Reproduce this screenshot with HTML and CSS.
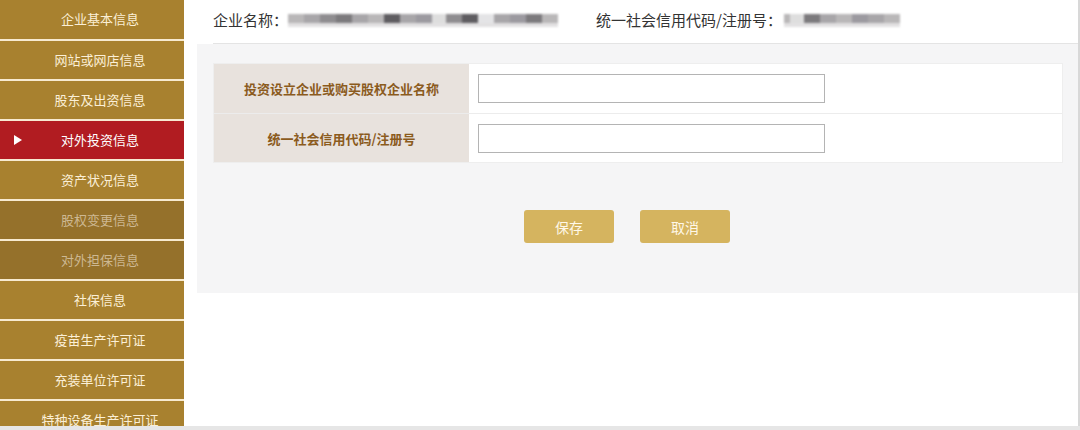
FILE: index.html
```html
<!DOCTYPE html>
<html lang="zh-CN">
<head>
<meta charset="utf-8">
<link rel="stylesheet" href="styles.css">
</head>
<body>
<div class="page">
  <nav class="sidebar">
    <div class="nav-item">企业基本信息</div>
    <div class="nav-item">网站或网店信息</div>
    <div class="nav-item">股东及出资信息</div>
    <div class="nav-item active"><span class="arrow"></span>对外投资信息</div>
    <div class="nav-item">资产状况信息</div>
    <div class="nav-item disabled">股权变更信息</div>
    <div class="nav-item disabled">对外担保信息</div>
    <div class="nav-item">社保信息</div>
    <div class="nav-item">疫苗生产许可证</div>
    <div class="nav-item">充装单位许可证</div>
    <div class="nav-item">特种设备生产许可证</div>
  </nav>
  <main class="main">
    <div class="header">
      <div class="field name-field">
        <span class="field-label">企业名称：</span>
        <span class="blur blur-name"><i class="b1"></i><i class="b3"></i><i class="b2"></i><i class="b4"></i><i class="b3"></i><i class="b1"></i><i class="b6"></i><i class="b3"></i><i class="b5"></i><i class="gap"></i><i class="b2"></i><i class="b6"></i><i class="gap2"></i><i class="b3"></i><i class="b5"></i><i class="b4"></i><i class="b1"></i></span>
      </div>
      <div class="field code-field">
        <span class="field-label">统一社会信用代码/注册号：</span>
        <span class="blur blur-code"><i class="b1 narrow"></i><i class="gap"></i><i class="b4"></i><i class="b3"></i><i class="b1"></i><i class="b5"></i><i class="b3"></i><i class="b1"></i></span>
      </div>
    </div>
    <div class="panel">
      <div class="form-table">
        <div class="row">
          <div class="label">投资设立企业或购买股权企业名称</div>
          <div class="value"><input class="text-input" type="text"></div>
        </div>
        <div class="row">
          <div class="label">统一社会信用代码/注册号</div>
          <div class="value"><input class="text-input" type="text"></div>
        </div>
      </div>
      <div class="actions">
        <button class="btn">保存</button>
        <button class="btn">取消</button>
      </div>
    </div>
  </main>
  <div class="scrollbar"></div>
</div>
<div class="bottom-strip"></div>
</body>
</html>
```

FILE: styles.css
```css
* { box-sizing: border-box; }
html, body {
  margin: 0;
  padding: 0;
  background: #ffffff;
  font-family: "Noto Sans CJK SC", "Noto Sans", sans-serif;
}
.page {
  display: flex;
  height: 426px;
  overflow: hidden;
}
.sidebar {
  width: 184px;
  flex: none;
  display: flex;
  flex-direction: column;
  gap: 2px;
  background: #f7ead0;
  height: 426px;
  overflow: hidden;
}
.nav-item {
  flex: none;
  height: 38px;
  line-height: 38px;
  background: #a8812f;
  color: #fbefd6;
  font-size: 13px;
  text-align: center;
  padding-left: 16px;
  position: relative;
  white-space: nowrap;
}
.nav-item:first-child { height: 39px; }
.nav-item.disabled {
  background: #95712b;
  color: #cdb892;
}
.nav-item.active {
  background: #b11c21;
  color: #ffffff;
}
.arrow {
  position: absolute;
  left: 14px;
  top: 14px;
  width: 0;
  height: 0;
  border-top: 5px solid transparent;
  border-bottom: 5px solid transparent;
  border-left: 8px solid #ffffff;
}
.main {
  flex: 1;
  margin-left: 13px;
  display: flex;
  flex-direction: column;
}
.header {
  height: 44px;
  margin-left: 16px;
  border-bottom: 1px solid #e4e4e4;
  display: flex;
  align-items: center;
  font-size: 15px;
  color: #333333;
  padding-bottom: 4px;
}
.field {
  display: flex;
  align-items: center;
}
.name-field { width: 383px; }
.blur {
  display: flex;
  align-items: flex-start;
  height: 14px;
  filter: blur(0.9px);
  position: relative;
  top: 1px;
}
.blur-name { margin-left: 0; }
.blur-code { margin-left: 2px; }
.blur i {
  display: block;
  height: 9px;
  width: 16px;
  box-shadow: 0 4px 0 #e2e1e2;
}
.blur .narrow { width: 6px; }
.blur .b1 { background: #b9b7b8; }
.blur .b2 { background: #8f8d90; }
.blur .b3 { background: #a8a6a9; }
.blur .b4 { background: #7c7a7d; }
.blur .b5 { background: #9c9aa0; }
.blur .b6 { background: #5f5d61; }
.blur .gap { background: #dedede; width: 14px; }
.blur .gap2 { background: #e4e4e6; width: 16px; }
.panel {
  background: #f5f5f6;
  height: 249px;
  padding: 19px 15px 0 16px;
}
.form-table {
  background: #ffffff;
  border: 1px solid #eeeeee;
}
.row {
  display: flex;
  height: 49px;
}
.row + .row {
  border-top: 1px solid #ececec;
}
.label {
  width: 255px;
  flex: none;
  background: #e8e2dd;
  color: #8b5b1d;
  font-size: 13px;
  font-weight: bold;
  display: flex;
  align-items: center;
  justify-content: center;
}
.value {
  flex: 1;
  display: flex;
  align-items: center;
  padding-left: 9px;
}
.text-input {
  width: 347px;
  height: 29px;
  border: 1px solid #b4b4b4;
  background: #ffffff;
  margin: 0;
  padding: 0 6px;
  outline: none;
}
.actions {
  display: flex;
  gap: 26px;
  padding-left: 311px;
  margin-top: 47px;
}
.btn {
  width: 90px;
  height: 33px;
  background: #d5b45f;
  color: #fff8e8;
  border: none;
  border-radius: 3px;
  font-family: "Noto Sans CJK SC", "Noto Sans", sans-serif;
  font-size: 14px;
  padding: 0;
}
.scrollbar {
  width: 2px;
  flex: none;
  background: #d8d8d8;
}
.bottom-strip {
  height: 4px;
  background: #e6e6e6;
}
```
